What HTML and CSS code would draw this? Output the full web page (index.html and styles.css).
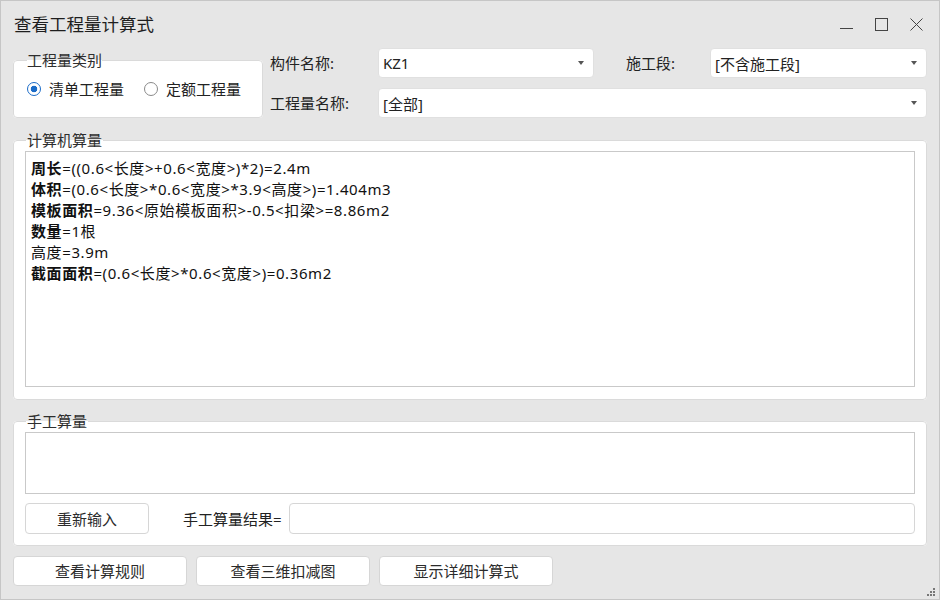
FILE: index.html
```html
<!DOCTYPE html>
<html lang="zh-CN">
<head>
    <meta charset="UTF-8">
    <title>查看工程量计算式</title>
    <link rel="stylesheet" href="styles.css">
</head>
<body>
    <div class="window">
        <div class="titlebar">
            <span class="title">查看工程量计算式</span>
            <div class="controls">
                <span class="ctl">
                    <svg width="13" height="13" viewBox="0 0 13 13"><path d="M0 10.5H13" stroke="#444" stroke-width="1"/></svg>
                </span>
                <span class="ctl">
                    <svg width="13" height="13" viewBox="0 0 13 13"><rect x="0.5" y="0.5" width="12" height="12" fill="none" stroke="#444" stroke-width="1"/></svg>
                </span>
                <span class="ctl">
                    <svg width="13" height="13" viewBox="0 0 13 13"><path d="M0.5 0.5L12.5 12.5M12.5 0.5L0.5 12.5" stroke="#444" stroke-width="1"/></svg>
                </span>
            </div>
        </div>

        <div class="top">
            <fieldset class="group kind">
                <legend>工程量类别</legend>
                <label class="radio checked"><span class="dot"></span>清单工程量</label>
                <label class="radio"><span class="dot"></span>定额工程量</label>
            </fieldset>
            <div class="fields">
                <span class="label">构件名称:</span>
                <div class="combo"><span>KZ1</span><i class="arrow"></i></div>
                <span class="label stage">施工段:</span>
                <div class="combo"><span>[不含施工段]</span><i class="arrow"></i></div>
                <span class="label">工程量名称:</span>
                <div class="combo wide"><span>[全部]</span><i class="arrow"></i></div>
            </div>
        </div>

        <fieldset class="group auto">
            <legend>计算机算量</legend>
            <div class="textbox formulas">
                <div><b>周长</b>=((0.6&lt;长度&gt;+0.6&lt;宽度&gt;)*2)=2.4m</div>
                <div><b>体积</b>=(0.6&lt;长度&gt;*0.6&lt;宽度&gt;*3.9&lt;高度&gt;)=1.404m3</div>
                <div><b>模板面积</b>=9.36&lt;原始模板面积&gt;-0.5&lt;扣梁&gt;=8.86m2</div>
                <div><b>数量</b>=1根</div>
                <div>高度=3.9m</div>
                <div><b>截面面积</b>=(0.6&lt;长度&gt;*0.6&lt;宽度&gt;)=0.36m2</div>
            </div>
        </fieldset>

        <fieldset class="group manual">
            <legend>手工算量</legend>
            <div class="textbox manual-input"></div>
            <div class="result-row">
                <button class="btn reinput">重新输入</button>
                <span class="result-label">手工算量结果=</span>
                <div class="result-input"></div>
            </div>
        </fieldset>

        <div class="actions">
            <button class="btn">查看计算规则</button>
            <button class="btn">查看三维扣减图</button>
            <button class="btn">显示详细计算式</button>
        </div>

        <svg class="grip" width="10" height="10" viewBox="0 0 10 10">
            <rect x="7" y="1" width="2" height="2" fill="#777"/>
            <rect x="4" y="4" width="2" height="2" fill="#777"/>
            <rect x="7" y="4" width="2" height="2" fill="#777"/>
            <rect x="1" y="7" width="2" height="2" fill="#777"/>
            <rect x="4" y="7" width="2" height="2" fill="#777"/>
            <rect x="7" y="7" width="2" height="2" fill="#777"/>
        </svg>
    </div>
</body>
</html>
```

FILE: styles.css
```css
body{
    margin: 0;
    font-family: "Noto Sans", "Noto Sans CJK SC", sans-serif;
    font-size: 15px;
    color: #222;
}
.window{
    position: relative;
    width: 940px;
    height: 600px;
    box-sizing: border-box;
    background-color: #e6e6e6;
    box-shadow: inset 0 0 0 1px #c6c6c6;
    overflow: hidden;
}
.titlebar{
    height: 48px;
    display: flex;
    align-items: center;
    justify-content: space-between;
    padding-left: 14px;
}
.title{
    font-size: 17.5px;
    line-height: 24px;
    color: #1e1e1e;
}
.controls{
    display: flex;
    padding-right: 6px;
}
.ctl{
    width: 35px;
    height: 24px;
    display: flex;
    align-items: center;
    justify-content: center;
}

/* group boxes */
.group{
    margin: 0;
    min-width: 0;
    box-sizing: border-box;
    background-color: #fff;
    border: 1px solid #dadada;
    border-radius: 4px;
}
.group legend{
    padding: 0 1px;
    margin-left: 1px;
    line-height: 20px;
    color: #2e2e2e;
}

.top{
    display: flex;
    gap: 7px;
    padding: 0 13px;
}
.kind{
    flex: none;
    width: 250px;
    margin-top: 2px;
    height: 68px;
    padding: 9px 13px 0;
    display: flex;
}
.kind legend{
    margin-left: 0;
    padding: 0;
}
.radio{
    flex: none;
    display: flex;
    align-items: center;
    height: 20px;
    line-height: 20px;
    white-space: nowrap;
    margin-right: 20px;
}
.radio .dot{
    flex: none;
    width: 14px;
    height: 14px;
    box-sizing: border-box;
    border: 1px solid #8a8a8a;
    border-radius: 50%;
    background: #fff;
    margin-right: 8px;
}
.radio.checked .dot{
    border: 1.5px solid #1b6cc8;
    background: radial-gradient(circle, #1b6cc8 0, #1b6cc8 3px, #fff 3.6px);
}

.fields{
    display: grid;
    grid-template-columns: 108px 216px 116px 217px;
    grid-template-rows: 30px 30px;
    row-gap: 10px;
    align-items: center;
}
.label{
    line-height: 20px;
    white-space: nowrap;
}
.stage{
    padding-left: 32px;
}
.combo{
    height: 30px;
    box-sizing: border-box;
    display: flex;
    align-items: center;
    justify-content: space-between;
    padding: 0 9px 0 4px;
    background-color: #fff;
    border: 1px solid #e0e0e0;
    border-radius: 4px;
}
.combo.wide{
    grid-column: 2 / 5;
}
.arrow{
    width: 0;
    height: 0;
    border-left: 3px solid transparent;
    border-right: 3px solid transparent;
    border-top: 4px solid #555;
}

.textbox{
    background-color: #fff;
    border: 1px solid #c9c9c9;
    box-sizing: border-box;
}

.auto{
    margin: 12px 13px 0;
    padding: 1px 11px 12px;
}
.formulas{
    height: 236px;
    padding: 6px 5px;
    line-height: 21px;
    letter-spacing: 0.6px;
    color: #111;
}
.formulas b{
    font-weight: 700;
}

.manual{
    margin: 11px 13px 0;
    padding: 1px 11px 11px;
}
.manual-input{
    height: 62px;
}
.result-row{
    display: flex;
    align-items: center;
    margin-top: 9px;
    height: 31px;
}
.result-label{
    margin-left: 34px;
    margin-right: 7px;
    line-height: 20px;
}
.result-input{
    flex: 1;
    height: 31px;
    box-sizing: border-box;
    background-color: #fff;
    border: 1px solid #d6d6d6;
    border-radius: 4px;
}

.btn{
    font: inherit;
    color: #2b2b2b;
    background-color: #fff;
    border: 1px solid #d6d6d6;
    border-radius: 4px;
    padding: 0;
    line-height: 20px;
}
.reinput{
    width: 124px;
    height: 31px;
}
.actions{
    display: flex;
    gap: 9px;
    margin: 10px 13px 0;
}
.actions .btn{
    width: 174px;
    height: 30px;
}

.grip{
    position: absolute;
    right: 4px;
    bottom: 3px;
}
```
